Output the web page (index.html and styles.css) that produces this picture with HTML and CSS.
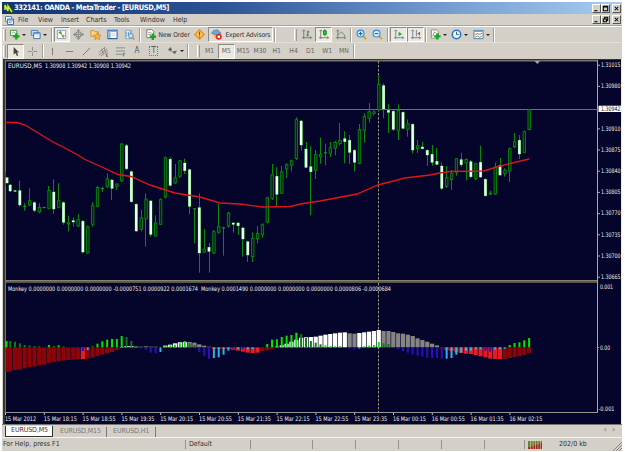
FILE: index.html
```html
<!DOCTYPE html>
<html lang="en">
<head>
<meta charset="utf-8">
<title>332141: OANDA - MetaTrader - [EURUSD,M5]</title>
<link rel="stylesheet" href="styles.css">
</head>
<body>
<div class="window">
  <header class="title">
    <svg class="logo" viewBox="0 0 10 11"><path d="M0 1L4 0L10 6V10L5 11L0 6Z" fill="#174a26"/><path d="M1 7V2L4 8V3L8 9" fill="none" stroke="#d9e84a" stroke-width="1.5"/></svg>
    <span class="caption">332141: OANDA - MetaTrader - [EURUSD,M5]</span>
    <span class="winbtns">
      <i><svg viewBox="0 0 8 8"><path d="M1.5 6.5H5"/></svg></i>
      <i><svg viewBox="0 0 8 8"><path d="M1.5 1.5H6.5V6.5H1.5ZM1.5 2.2H6.5"/></svg></i>
      <i class="close"><svg viewBox="0 0 8 8"><path d="M2 2L6 6M6 2L2 6"/></svg></i>
    </span>
  </header>
  <nav class="menu">
    <svg class="docicon" viewBox="0 0 9 10"><path d="M.5 1.5H6.5V6.5H.5Z" fill="#fff" stroke="#5b87b9"/><path d="M2.5 4H8.5V9.5H2.5Z" fill="#e9f2fa" stroke="#4675ad"/><path d="M3 5H8M4 8L5 6.5L6 7.5L7 6.5" fill="none" stroke="#4675ad" stroke-width=".8"/></svg>
    <span class="m-file">File</span><span class="m-view">View</span><span class="m-insert">Insert</span><span class="m-charts">Charts</span><span class="m-tools">Tools</span><span class="m-window">Window</span><span class="m-help">Help</span>
    <span class="winbtns">
      <i><svg viewBox="0 0 8 8"><path d="M1.5 6.5H5"/></svg></i>
      <i><svg viewBox="0 0 8 8"><path d="M3 3V1.5H6.5V5H5M1.5 3.5H5V6.5H1.5Z"/></svg></i>
      <i class="close"><svg viewBox="0 0 8 8"><path d="M2 2L6 6M6 2L2 6"/></svg></i>
    </span>
  </nav>
  <div class="bar main">
    <b class="grip"></b>
    <span class="btn drop"><svg viewBox="0 0 12 12"><path d="M1.5 1.5H8.5V7H1.5Z" fill="#fff" stroke="#3f9040"/><path d="M3 5L5 3L7 5" fill="none" stroke="#67a568"/><path d="M8 4.5V11.5M4.5 8H11.5" stroke="#16a81c" stroke-width="2.6"/></svg></span>
    <span class="btn drop"><svg viewBox="0 0 12 12"><path d="M1.5 1.5H8.5V7H1.5Z" fill="#b9dcf5" stroke="#4e82b8"/><path d="M4 4H11V10.5H4Z" fill="#e8f4fc" stroke="#3c72aa"/><path d="M4.5 5H10.5" stroke="#6aa5da" stroke-width="1.5"/></svg></span>
    <b class="sep"></b>
    <span class="btn on"><svg viewBox="0 0 12 12"><path d="M1.5 1.5H10.5V10.5H1.5Z" fill="#fff" stroke="#6da1cd"/><path d="M3 4L5 2.500L6 5ZM5.500 5L7 7" fill="#35a63a" stroke="#35a63a"/><path d="M6.500 7H9L8 9.500Z" fill="#d87824" stroke="#d87824"/></svg></span>
    <span class="btn"><svg viewBox="0 0 12 12"><circle cx="6" cy="6" r="3" fill="none" stroke="#8b8b8b" stroke-width="1.300"/><path d="M6 0V12M0 6H12M4.500 2L6 .5L7.500 2M4.500 10L6 11.500L7.500 10M2 4.500L.5 6L2 7.500M10 4.500L11.500 6L10 7.500" fill="none" stroke="#8b8b8b"/></svg></span>
    <span class="btn"><svg viewBox="0 0 12 12"><path d="M1 1.500H4L5 3H9V8H1Z" fill="#ffd87a" stroke="#c88d37"/><path d="M8 4L9.200 6.500L12 6.800L10 8.700L10.500 11.500L8 10.200L5.500 11.500L6 8.700L4 6.800L6.800 6.500Z" fill="#f7b53c" stroke="#c87c24" stroke-width=".7"/></svg></span>
    <span class="btn"><svg viewBox="0 0 12 12"><path d="M1 1.500H11V10.500H1Z" fill="#fff" stroke="#2d6bac" stroke-width="1.200"/><path d="M2 2.300H10" stroke="#5e9fda" stroke-width="1.500"/><path d="M2 3.500H4V9.500H2Z" fill="#7fb3df"/><path d="M5 5H9M5 7H9" stroke="#c7cdd4"/></svg></span>
    <span class="btn"><svg viewBox="0 0 12 12"><path d="M1.500 1.500H8.500V10.500H1.500Z" fill="#edf5fb" stroke="#8aa7bf"/><path d="M3 3V9M5 3V7M7 2V6" stroke="#6b94b5"/><circle cx="7.500" cy="7.500" r="2.500" fill="#cbe8fa" stroke="#4384bd"/><path d="M9 9L11.500 11.500" stroke="#d1902c" stroke-width="1.700"/></svg></span>
    <b class="sep"></b>
    <span class="btn order"><svg viewBox="0 0 12 12"><path d="M2 .7H7.500L9.500 3V9.500H2Z" fill="#fff" stroke="#777"/><path d="M3.500 4H7M3.500 6H7" stroke="#999"/><path d="M8.500 5V12M5 8.500H12" stroke="#16a81c" stroke-width="2.600"/></svg>New Order</span>
    <span class="btn"><svg viewBox="0 0 12 12"><path d="M6 .8L11.200 6L6 11.200L.8 6Z" fill="#ffc553" stroke="#d58b24" stroke-width="1.200"/><path d="M6 3V7M6 8.200V9.500" stroke="#8b5200" stroke-width="1.300"/></svg></span>
    <span class="btn expert on"><svg viewBox="0 0 12 12"><path d="M1.500 5L6 7L10.500 5L8 10H4Z" fill="#edbd4c"/><path d="M.5 4.500L3 1.500L7 .8L11 4.500L6 6.500Z" fill="#68a9d8" stroke="#3877ae" stroke-width=".7"/><circle cx="8.500" cy="8.500" r="3.300" fill="#dc2b1d"/><path d="M7.200 7.200H9.800V9.800H7.200Z" fill="#fff"/></svg>Expert Advisors</span>
    <b class="sep"></b><b class="space"></b><b class="grip"></b>
    <span class="btn"><svg viewBox="0 0 12 12" fill="none"><path d="M3 1V11M1 9.500H11.500M1.500 2.500L3 1L4.500 2.500M10 8L11.500 9.500L10 11" stroke="#777"/><path d="M7.500 2V8M6 7H7.500M7.500 3H9" stroke="#248c31" stroke-width="1.200"/></svg></span>
    <span class="btn on"><svg viewBox="0 0 12 12" fill="none"><path d="M3 1V11M1 9.500H11.500M1.500 2.500L3 1L4.500 2.500M10 8L11.500 9.500L10 11" stroke="#777"/><path d="M7.500 0V8" stroke="#198b20"/><path d="M6 2H9V6H6Z" fill="#17d72b" stroke="#0d831a"/></svg></span>
    <span class="btn"><svg viewBox="0 0 12 12" fill="none"><path d="M3 1V11M1 9.500H11.500M1.500 2.500L3 1L4.500 2.500M10 8L11.500 9.500L10 11" stroke="#777"/><path d="M3.500 7Q6 2 8 4T11 8" stroke="#5b9361"/></svg></span>
    <b class="sep"></b>
    <span class="btn"><svg viewBox="0 0 12 12"><path d="M7.500 7.500L11 11" stroke="#d5a32c" stroke-width="2"/><circle cx="5" cy="5" r="3.800" fill="#cfeeff" stroke="#398ace" stroke-width="1.200"/><path d="M3 5H7M5 3V7" stroke="#1969b5" stroke-width="1.200"/></svg></span>
    <span class="btn"><svg viewBox="0 0 12 12"><path d="M7.500 7.500L11 11" stroke="#d5a32c" stroke-width="2"/><circle cx="5" cy="5" r="3.800" fill="#cfeeff" stroke="#398ace" stroke-width="1.200"/><path d="M3 5H7" stroke="#1969b5" stroke-width="1.200"/></svg></span>
    <b class="sep"></b>
    <span class="btn on"><svg viewBox="0 0 12 12" fill="none"><path d="M3 1V11M1 9.500H11.500M1.500 2.500L3 1L4.500 2.500M10 8L11.500 9.500L10 11" stroke="#6484a0"/><path d="M6 3L10 5.500L6 8Z" fill="#2baa38"/></svg></span>
    <span class="btn on"><svg viewBox="0 0 12 12" fill="none"><path d="M3 1V11M1 9.500H11.500M1.500 2.500L3 1L4.500 2.500M10 8L11.500 9.500L10 11M7 1V8" stroke="#6484a0"/><path d="M11 3L8 5L11 7Z" fill="#cc4330"/></svg></span>
    <b class="sep"></b>
    <span class="btn drop"><svg viewBox="0 0 12 12"><path d="M1.500 1H7L9 3V10H1.500Z" fill="#fff" stroke="#848a7b"/><path d="M3 8Q5 1 6 4" fill="none" stroke="#777"/><path d="M8 4.500V11.500M4.500 8H11.500" stroke="#16a81c" stroke-width="2.600"/></svg></span>
    <span class="btn drop"><svg viewBox="0 0 12 12"><circle cx="6" cy="6" r="4.600" fill="#e5f5ff" stroke="#2878bd" stroke-width="1.700"/><path d="M6 3V6H8.500" fill="none" stroke="#456"/></svg></span>
    <span class="btn drop"><svg viewBox="0 0 12 12"><path d="M1 1.500H11V10.500H1Z" fill="#fff" stroke="#427bb0"/><path d="M1.500 2.500H10.500" stroke="#64a8df" stroke-width="1.500"/><path d="M2 6L5 5L7 6L10 4.500" fill="none" stroke="#be4b40"/><path d="M2 9L5 7.500L7 9L10 7.500" fill="none" stroke="#4b9d55"/></svg></span>
    <b class="sep"></b>
  </div>
  <div class="bar tools">
    <b class="grip"></b>
    <span class="btn on"><svg viewBox="0 0 12 12"><path d="M4 1V9.500L6 7.600L7.500 11L9 10.300L7.500 7H10Z" fill="#444"/></svg></span>
    <span class="btn"><svg viewBox="0 0 12 12"><path d="M6 1V5M6 7V11M1 6H5M7 6H11" stroke="#888"/></svg></span>
    <b class="sep"></b>
    <span class="btn"><svg viewBox="0 0 12 12"><path d="M6 2V10" stroke="#777"/></svg></span>
    <span class="btn"><svg viewBox="0 0 12 12"><path d="M2 6H10" stroke="#777"/></svg></span>
    <span class="btn"><svg viewBox="0 0 12 12"><path d="M2 10L10 2" stroke="#777"/></svg></span>
    <span class="btn"><svg viewBox="0 0 12 12"><path d="M1 7L8 1M1 10L10 3M3 11L11 5M4 3L6 9M7 2L8 7" stroke="#777" stroke-width=".8"/><path d="M11 8.500H9V11.500H11M9 10H10.500" fill="none" stroke="#555" stroke-width=".7"/></svg></span>
    <span class="btn"><svg viewBox="0 0 12 12"><path d="M1 2H11M1 5.500H11M1 9H8" stroke="#888"/><path d="M11 8H9V11.500M9 9.500H10.500" fill="none" stroke="#555" stroke-width=".7"/></svg></span>
    <span class="btn letter">A</span>
    <span class="btn letter"><i class="boxed">T</i></span>
    <span class="btn drop arrows"><svg viewBox="0 0 12 12"><path d="M1 4L4 1L5.500 4L4 6ZM6 6L11 5L8.500 9Z" fill="#666"/><path d="M4 5L8 8" stroke="#666" stroke-dasharray="1 1"/></svg></span>
    <b class="sep"></b><b class="space small"></b><b class="grip"></b>
    <span class="btn">M1</span><span class="btn on">M5</span><span class="btn">M15</span><span class="btn">M30</span><span class="btn">H1</span><span class="btn">H4</span><span class="btn">D1</span><span class="btn">W1</span><span class="btn">MN</span>
    <b class="sep"></b>
  </div>
  <main class="chart"><svg id="chart" viewBox="3 59 619 365" width="619" height="365"></svg></main>
  <div class="tabs"><span class="tab active">EURUSD,M5</span><span class="tab">EURUSD,M15</span><span class="tab">EURUSD,H1</span><span class="scroll"><svg viewBox="0 0 16 6"><path d="M4 0V6L1 3ZM12 0V6L15 3Z" fill="#aaa69e"/></svg></span></div>
  <footer class="status">
    <span class="help">For Help, press F1</span><span class="profile">Default</span><span class="c3"></span><span class="c4"></span><span class="c5"></span><span class="c6"></span><span class="c7"></span><span class="c8"></span>
    <span class="net"><svg viewBox="0 0 14 8"><path d="M0 0H14V5L0 7Z" fill="#6b8429"/><path d="M0 8V6.500L14 2V8Z" fill="#a8241b"/><path d="M2.500 0V8M5 0V8M7.500 0V8M10 0V8M12.500 0V8" stroke="#d4d0c8" stroke-width=".6"/></svg>202/0 kb</span>
    <svg class="resize" viewBox="0 0 9 9"><path d="M0 9L9 0M3 9L9 3M6 9L9 6" stroke="#8a867e"/></svg>
  </footer>
</div>
<script src="chart.js"></script>
</body>
</html>
```
FILE: styles.css
```css
* { box-sizing: border-box; }
body { margin: 0; background: #fff; font: 7.4px/10px "DejaVu Sans Condensed", "DejaVu Sans", sans-serif; color: #303030; }
.window { width: 620px; height: 449px; margin: 2px 0 0 2px; background: #d4d0c8; }
.title { height: 12px; display: flex; align-items: center; background: linear-gradient(90deg, #123572, #2c5396 35%, #6c94ca 67%, #a6cdf1); color: #fff; }
.logo { width: 10px; height: 11px; margin-left: 2px; }
.caption { font-size: 7.5px; font-weight: bold; white-space: nowrap; letter-spacing: -.38px; }
.winbtns { margin-left: auto; display: flex; padding-right: 1px; }
.winbtns i { width: 9px; height: 9px; background: #d4d0c8; border: 1px solid; border-color: #fff #555 #555 #fff; display: flex; }
.winbtns .close { margin-left: 2px; }
.winbtns svg { width: 7px; height: 7px; fill: none; stroke: #000; stroke-width: 1.2; }
.menu { height: 12px; display: flex; align-items: center; border-bottom: 1px solid #aaa69e; }
.docicon { width: 9px; height: 10px; margin: 0 3px 0 3px; }
.menu > span:not(.winbtns) { white-space: nowrap; font-size: 7px; }
.m-file { width: 20px; margin-left: 1px; }
.m-view { width: 23px; }
.m-insert { width: 25px; }
.m-charts { width: 28px; }
.m-tools { width: 26px; }
.m-window { width: 33px; }
.bar { height: 16px; display: flex; align-items: center; white-space: nowrap; border-top: 1px solid #fff; }
.bar.tools { border-top-color: #e2dfd8; color: #666; font-size: 6.8px; height: 17px; }
.grip { flex: none; width: 3px; height: 12px; margin: 0 1px; border-left: 1px solid #fff; border-right: 1px solid #999; }
.sep { flex: none; width: 2px; height: 14px; margin: 0 1px; border-left: 1px solid #a19d95; border-right: 1px solid #fff; }
.space { flex: none; width: 16px; }
.space.small { width: 6px; }
.btn { flex: none; width: 16.8px; height: 15px; display: flex; align-items: center; justify-content: center; }
.btn svg { width: 11px; height: 11px; flex: none; }
.on { background: #ebe8df; border: 1px solid; border-color: #8c8880 #fff #fff #8c8880; }
.drop { width: 21.3px; justify-content: flex-start; padding-left: 2px; gap: 2px; }
.drop::after { content: ""; border: 2px solid transparent; border-top-color: #222; border-bottom: 0; }
.order { width: 50px; justify-content: flex-start; padding-left: 3px; gap: 3px; font-size: 6.7px; letter-spacing: -.1px; }
.expert { width: 65px; justify-content: flex-start; padding-left: 2px; gap: 3px; font-size: 6.7px; letter-spacing: -.15px; }
.expert.on { background: #dedad2; }
.letter { font-size: 8px; color: #555; }
.boxed { font-style: normal; border: 1px dotted #777; width: 9px; height: 10px; line-height: 8px; text-align: center; }
.arrows { width: 24px; padding-left: 5px; }
.chart { height: 365px; margin: 0 0 0 1px; background: #05042b; }
.chart svg { display: block; overflow: visible; }
#chart text { font-family: "DejaVu Sans Condensed", sans-serif; font-size: 6.2px; fill: #f2f0e5; white-space: pre; }
#chart .current { fill: #111; }
.tabs { height: 14px; display: flex; padding: 1px 0 0 3px; border-top: 1px solid #777; font-size: 7px; letter-spacing: -.1px; color: #777; border-bottom: 1px solid #f5f3ee; }
.tab { height: 10px; margin-top: 1px; padding: 0 7px; border-right: 1px solid #777; line-height: 8px; width: 53px; white-space: nowrap; }
.tab:nth-child(2) { width: 54px; padding-left: 7px; }
.tab:nth-child(3) { width: 49px; padding-left: 6px; }
.tab.active { width: 48px; background: #fff; color: #333; border: 1px solid #333; border-top: 0; padding-left: 5px; margin-top: 0; height: 11px; line-height: 9px; }
.scroll { margin: 0 4px 0 auto; width: 16px; padding-top: 1px; }
.scroll svg { width: 15px; height: 5px; display: block; }
.status { height: 13px; display: flex; align-items: center; font-size: 7px; }
.status > span { height: 9px; line-height: 9px; border-right: 1px solid #96928a; flex: none; }
.help { width: 184px; padding-left: 1px; }
.profile { width: 65px; padding-left: 3px; }
.c3 { width: 62px; }
.c4, .c5, .c6, .c7 { width: 43px; }
.c8 { width: 40px; }
.status > .net { display: flex; align-items: center; gap: 17px; padding-left: 3px; border: 0; width: 82px; }
.net svg { width: 14px; height: 8px; }
.resize { width: 9px; height: 9px; margin-left: auto; align-self: flex-end; }
```
FILE: chart.js
```js
// Candles: high, body top, body bottom, low, filled. Values in thirds of a pixel below the chart top.
const candles = [
[336,352,370,380,1],[372,374,394,396,1],[390,391,395,396,1],[362,391,436,440,1],[430,438,441,452,0],[385,421,436,438,0],[424,427,452,456,1],[430,441,457,460,0],[440,441,444,445,0],[378,390,446,448,0],
[358,395,448,462,1],[370,421,443,445,0],[424,427,488,494,1],[467,487,493,514,0],[472,481,487,500,1],[462,478,499,501,0],[480,483,577,580,1],[497,499,580,581,0],[427,436,494,500,0],[378,381,440,442,0],
[380,384,387,395,0],[340,355,381,384,0],[358,359,386,420,1],[370,371,380,390,0],[249,251,364,366,0],[252,256,327,330,1],[332,334,426,428,1],[430,432,514,516,1],[450,472,509,514,0],[400,416,478,560,0],
[420,422,524,530,1],[466,488,529,530,0],[415,418,494,495,0],[290,292,412,416,0],[292,297,377,380,1],[312,352,370,372,0],[300,301,350,354,0],[296,308,333,342,1],[326,328,440,462,1],[444,445,448,550,0],
[400,442,580,638,1],[508,566,578,579,0],[549,561,575,638,1],[510,514,580,582,0],[432,499,518,521,0],[500,502,505,587,0],[456,458,499,503,0],[486,488,494,518,1],[486,488,498,525,1],[500,503,538,590,1],
[542,544,586,606,1],[517,534,591,606,0],[498,519,538,550,0],[490,493,524,533,0],[410,412,488,490,0],[312,343,416,420,0],[322,348,404,438,1],[318,334,401,402,0],[310,313,328,354,0],[299,301,317,334,0],
[172,178,297,300,0],[180,182,256,272,1],[246,266,323,324,1],[259,319,336,466,1],[270,283,332,357,0],[233,282,291,311,0],[251,277,280,316,0],[246,262,281,291,0],[243,246,266,286,0],[189,240,252,256,0],
[214,235,246,310,1],[225,240,278,312,1],[268,270,308,334,1],[192,208,311,313,0],[160,168,212,248,0],[129,154,176,188,0],[152,154,162,166,0],[45,72,150,152,0],[70,76,148,175,1],[132,150,158,219,1],
[150,153,209,213,1],[133,150,214,240,0],[154,156,206,208,1],[178,190,209,230,0],[190,192,271,280,1],[240,256,267,279,0],[245,260,267,268,1],[268,270,286,318,1],[255,282,308,317,1],[264,303,314,316,1],
[307,317,386,390,1],[318,352,380,384,0],[330,340,360,390,0],[294,295,338,347,0],[278,298,315,321,1],[295,297,310,361,0],[300,304,351,354,1],[308,310,357,360,0],[257,306,352,354,1],[355,357,408,410,1],
[392,398,403,405,0],[308,320,403,405,0],[294,315,346,348,1],[325,329,342,350,0],[262,265,335,366,0],[219,244,261,264,0],[225,240,283,297,1],[212,214,278,280,0],[148,148,210,211,0]];

const color = {D:'#8b0408', R:'#e51c24', W:'#fff', Y:'#858585', G:'#00e600', g:'#087d10', B:'#2910c4', C:'#27b5ec'};
// Histogram runs: first bar index, colour key, bar ends.
const wide = [
[0,'D',[276,273,270,269,265,261,260,256,254,249,246,244,242,240,239,238]],[16,'R',[237]],[17,'D',[236,233,228,224,220,216,210]],
[24,'W',[202,198,198,200]],[28,'Y',[200,199,200,200]],[33,'W',[197,194,190,187,186]],[38,'Y',[186,188,193,197,200]],
[43,'R',[207,207,206,207,210,212,215,218,219,218]],[53,'D',[213,211,207]],
[56,'W',[200,196,191,185,179,173,172,171,170,167,164,162,160,158,157]],[71,'Y',[160,161]],[73,'W',[159,157,155,153,150]],
[78,'Y',[153,153,156,160,161,164,168,175,180,185,191,196]],[90,'D',[206]],[91,'R',[210,213,217,219,221,222,225,229,232,236,237,237]],[103,'D',[237,234,231,228,225,219]]];
const thin = [
[0,'G',[183]],[1,'g',[183,185,190,195,196,198,199]],[9,'G',[195]],[10,'g',[198]],[11,'G',[196]],[12,'g',[199]],[15,'B',[206,213]],[17,'C',[210]],
[18,'g',[198]],[19,'G',[191,184,179,177,177,168]],[25,'g',[171,183,198]],[28,'B',[206,209,218,220]],[32,'C',[216]],[33,'G',[197,196,194,190,183]],[38,'g',[190,195]],[40,'B',[216,227,236]],
[43,'C',[234,232,224,212]],[47,'B',[208]],[48,'C',[207]],[49,'B',[208]],[50,'C',[208,207]],[54,'G',[192,179,178,171,167,165,158]],[61,'g',[162,174,183,188,193]],[66,'G',[196,199,199,199]],[71,'B',[206,209]],[73,'C',[206]],
[74,'G',[199,197,195,186]],[78,'g',[190,192]],[81,'B',[208,213,218,224,227,230,233,234,234,236]],[91,'C',[236,234,224,218,212,212,208,208]],[99,'B',[212,215]],[101,'C',[209,208,206]],[104,'G',[195,189,187,181,174]]];

const out = [];
const X = i => 5.3 + i * 4.85;
const rect = (x, y, w, h, f, extra = '') => out.push(`<rect x="${x.toFixed(2)}" y="${y.toFixed(2)}" width="${w}" height="${h.toFixed(2)}" fill="${f}" ${extra}/>`);
const text = (x, y, s, w, cls = '') => out.push(`<text x="${x}" y="${y}" textLength="${w}" lengthAdjust="spacingAndGlyphs" class="${cls}">${s}</text>`);

rect(3, 59, 619, 365, '#05042b');
rect(3, 59, 2, 365, '#35352f');
rect(3, 59, 618, 1, '#35352f');
rect(5, 60, 593, 1.5, '#77756b');
rect(5, 280, 593, 1.7, '#85836f');
rect(5, 282, 593, 1, '#55554c');
rect(5, 60, 1, 353, '#77756b');
rect(597, 60, 1, 353, '#aaa9a9');
rect(5, 412, 593, 1, '#96958d');
rect(621, 59, 1, 365, '#eeece7');
rect(6, 109, 592, 1, '#6c6e7c');
out.push('<path d="M378.5 61V280M378.5 283V412" stroke="#98956d" stroke-dasharray="2.5 1.5"/>');
out.push('<path d="M534.5 61H540L537.300 64Z" fill="#a3a3ad"/>');

candles.forEach(([h, t, b, l, filled], i) => {
  const x = X(i), y = v => 60 + v / 3, c = '#07890d';
  const left = i ? x - 1.5 : 5.5;
  rect(Math.round(x - .5), y(h), 1, (l - h) / 3, c);
  const bh = Math.max(1, (b - t) / 3);
  if (filled) {
    rect(left, y(t), 3, bh, '#17b821');
    rect(left + .3, y(t) + .3, 2.4, Math.max(.6, bh - .6), '#efffef');
  } else if (bh < 1.5) rect(left, y(t), 3, bh, '#0aa613');
  else rect(left + .4, y(t) + .4, 2.4, bh - .8, '#05210f', `stroke="${c}" stroke-width=".9"`);
});
out.push('<path d="M5 122.5H17L25 125L53 142L63 147L78 155L84 159L104 168L118 174.5L131 176.500L150 185L175 193L200 197L220 203L240 204L262 207L290 206.500L303 203.500L320 201L357 194L378 185L405 178L430 175L440 173L450 171.500L484 171L500 166L529 159" fill="none" stroke="#e01518" stroke-width="1.350"/>');

const zero = 347.3;
const draw = (runs, w) => runs.forEach(([start, key, ends]) => ends.forEach((end, j) => {
  const y = 280 + end / 3, left = Math.max(5.5, X(start + j) - w / 2);
  rect(left, Math.min(y, zero), w, Math.max(.4, Math.abs(y - zero)), color[key]);
}));
draw(wide, 4.2);
draw(thin, 2);

text(8, 68, 'EURUSD,M5', 34);
text(45, 68, '1.30908 1.30942 1.30908 1.30942', 86);
text(8, 290.5, 'Monkey 0.0000000 0.0000000 0.0000000 -0.0000751 0.0000922 0.0001674  Monkey 0.0001490 0.0000000 0.0000000 0.0000000 0.0000806 -0.0000684', 383);
['1.31015','1.30980','','1.30910','1.30875','1.30840','1.30805','1.30770','1.30735','1.30700','1.30665'].forEach((s, i) => {
  const y = 64.7 + i * 21.2;
  if (s) { rect(598, y, 2, 1, '#aaa'); text(601, y + 2.3, s, 19.5); }
});
rect(598.5, 105.7, 23, 6.3, '#fff');
text(601, 111.2, '1.30942', 19.5, 'current');
text(600, 288.700, '0.001', 13);
text(600, 349.500, '0.00', 10);
text(598.500, 411, '-0.001', 16);
rect(597, 347, 2, 1, '#aaa');
['15 Mar 2012','15 Mar 18:15','15 Mar 18:55','15 Mar 19:35','15 Mar 20:15','15 Mar 20:55','15 Mar 21:35','15 Mar 22:15','15 Mar 22:55','15 Mar 23:35','16 Mar 00:15','16 Mar 00:55','16 Mar 01:35','16 Mar 02:15'].forEach((s, i) => {
  rect(5 + i * 38.8, 413, 1, 2, '#bbb');
  text((5 + i * 38.8).toFixed(1), 420.800, s, i ? 33 : 31);
});
document.getElementById('chart').innerHTML = out.join('');
```
